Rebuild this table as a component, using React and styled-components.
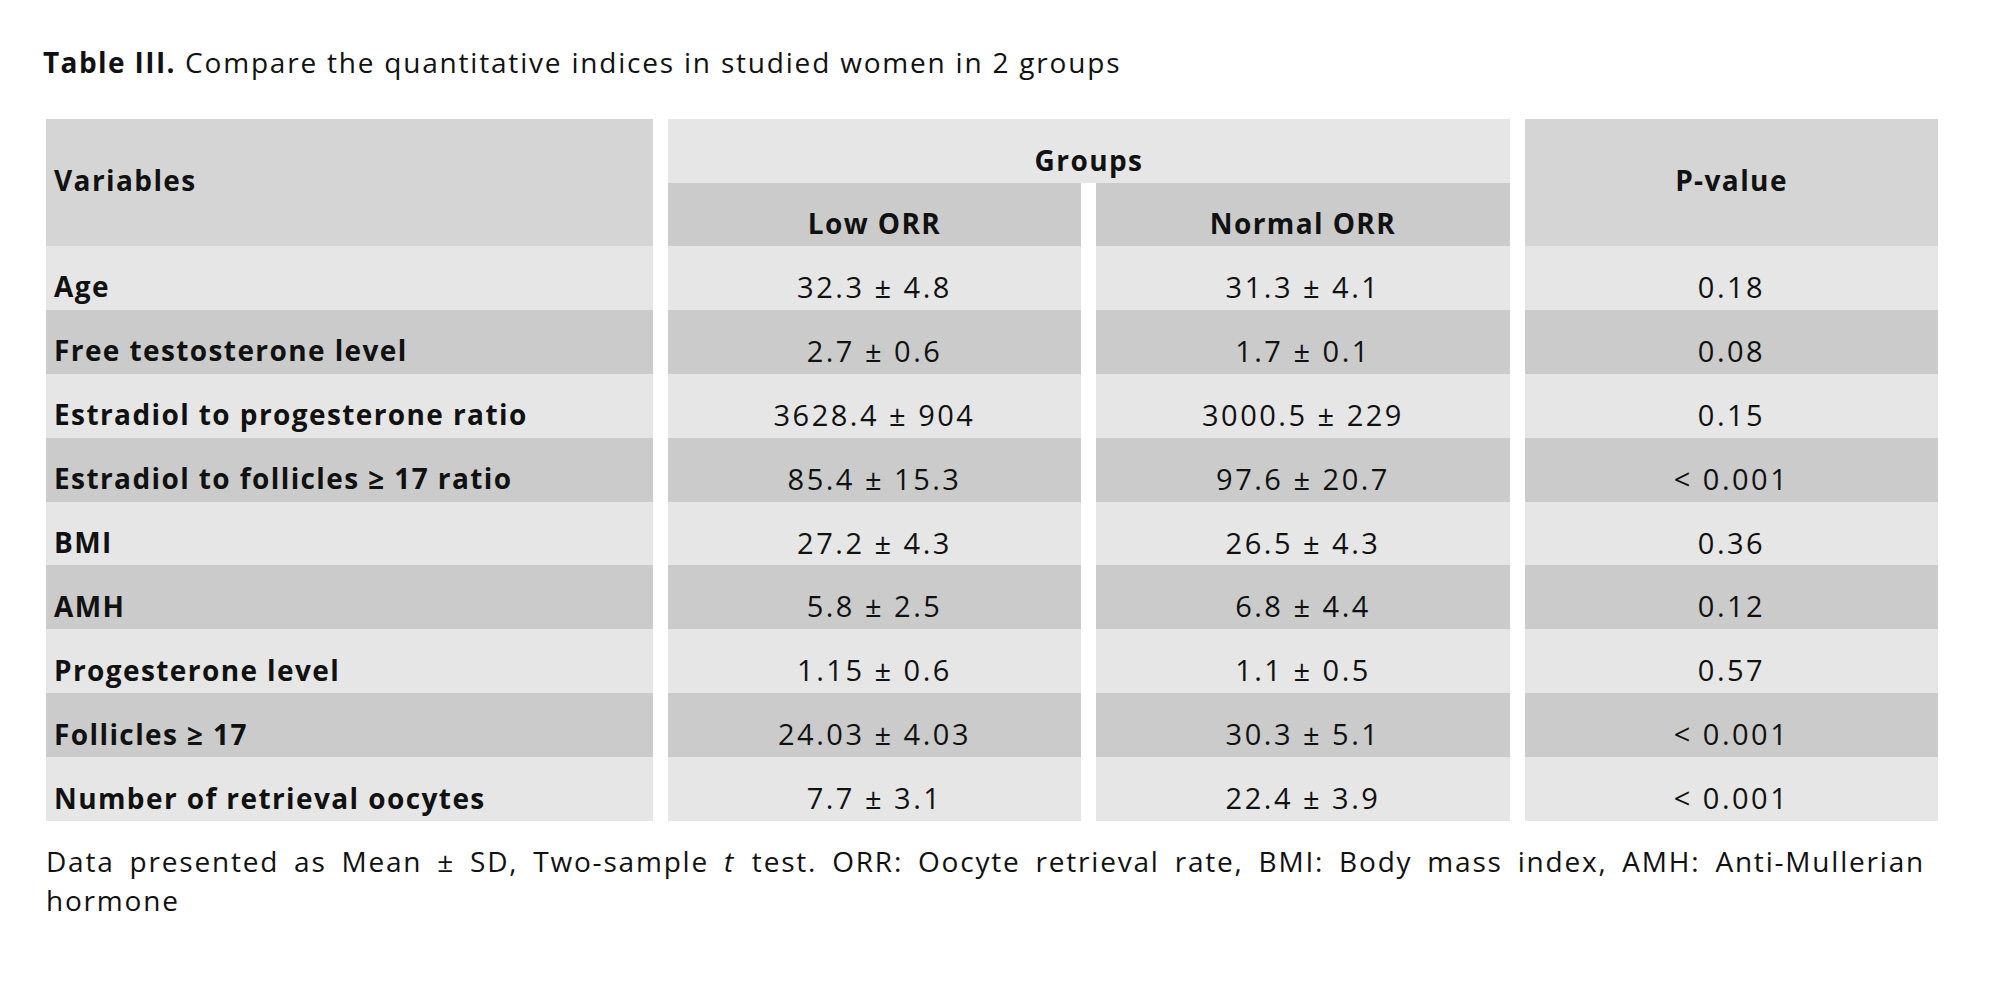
import React from "react";
import styled, { createGlobalStyle } from "styled-components";

const rows = [
  ["Age", "32.3 ± 4.8", "31.3 ± 4.1", "0.18"],
  ["Free testosterone level", "2.7 ± 0.6", "1.7 ± 0.1", "0.08"],
  ["Estradiol to progesterone ratio", "3628.4 ± 904", "3000.5 ± 229", "0.15"],
  ["Estradiol to follicles ≥ 17 ratio", "85.4 ± 15.3", "97.6 ± 20.7", "< 0.001"],
  ["BMI", "27.2 ± 4.3", "26.5 ± 4.3", "0.36"],
  ["AMH", "5.8 ± 2.5", "6.8 ± 4.4", "0.12"],
  ["Progesterone level", "1.15 ± 0.6", "1.1 ± 0.5", "0.57"],
  ["Follicles ≥ 17", "24.03 ± 4.03", "30.3 ± 5.1", "< 0.001"],
  ["Number of retrieval oocytes", "7.7 ± 3.1", "22.4 ± 3.9", "< 0.001"],
];

const tones = {
  light: "#e6e6e6",
  mid: "#d5d5d5",
  dark: "#cbcbcb",
};

const App = () => {
  return (
    <>
      <GlobalStyle />
      <Page>
        <Caption>
          <b>Table III.</b> Compare the quantitative indices in studied women in 2 groups
        </Caption>

        <Grid>
          <HeadCell $tone="mid" $rows="1 / 3" $cols="1" $left $merged>
            Variables
          </HeadCell>
          <HeadCell $tone="light" $rows="1" $cols="2 / 4">
            Groups
          </HeadCell>
          <HeadCell $tone="mid" $rows="1 / 3" $cols="4" $merged>
            P-value
          </HeadCell>
          <HeadCell $tone="dark" $rows="2" $cols="2">
            Low ORR
          </HeadCell>
          <HeadCell $tone="dark" $rows="2" $cols="3">
            Normal ORR
          </HeadCell>

          {rows.map((row, i) =>
            row.map((value, j) => (
              <Cell
                key={`${i}-${j}`}
                $tone={i % 2 === 0 ? "light" : "dark"}
                $left={j === 0}
                $bold={j === 0}
              >
                {value}
              </Cell>
            ))
          )}
        </Grid>

        <Footnote>
          Data presented as Mean ± SD, Two-sample <Em>t</Em> test. ORR: Oocyte retrieval
          rate, BMI: Body mass index, AMH: Anti-Mullerian hormone
        </Footnote>
      </Page>
    </>
  );
};

export default App;

// Styled Components
const GlobalStyle = createGlobalStyle`
  body {
    margin: 0;
    background: #ffffff;
    font-family: "Open Sans", Lato, sans-serif;
    color: #111111;
  }
`;

const Page = styled.div`
  display: flex;
  flex-direction: column;
  width: 2000px;
  padding: 44px 0 0 46px;
  box-sizing: border-box;
`;

const Caption = styled.div`
  font-size: 28px;
  line-height: 36px;
  letter-spacing: 1.8px;
  margin-left: -3px;
  margin-bottom: 39px;

  b {
    font-weight: 700;
    letter-spacing: 1.4px;
  }
`;

const Grid = styled.div`
  display: grid;
  grid-template-columns: 607px 413px 414px 413px;
  grid-template-rows: 64px 63px repeat(9, 63.9px);
  column-gap: 15px;
  width: 1892px;
`;

const Cell = styled.div`
  display: flex;
  align-items: center;
  justify-content: ${(p) => (p.$left ? "flex-start" : "center")};
  padding: 17px 0 0 ${(p) => (p.$left ? "8px" : "0")};
  background: ${(p) => tones[p.$tone]};
  font-size: ${(p) => (p.$bold ? "28px" : "29px")};
  letter-spacing: ${(p) => (p.$bold ? "1.4px" : "2.5px")};
  font-weight: ${(p) => (p.$bold ? 700 : 400)};
  white-space: nowrap;
`;

const HeadCell = styled(Cell)`
  grid-row: ${(p) => p.$rows};
  grid-column: ${(p) => p.$cols};
  font-size: 28px;
  font-weight: 700;
  letter-spacing: 1.4px;
  padding-top: ${(p) => (p.$merged ? "0" : "17px")};
  padding-bottom: ${(p) => (p.$merged ? "6px" : "0")};
`;

const Footnote = styled.p`
  width: 1879px;
  margin: 21px 0 0;
  font-size: 28px;
  line-height: 39px;
  letter-spacing: 1.8px;
  text-align: justify;
`;

const Em = styled.i`
  font-style: italic;
  padding-right: 2px;
`;
